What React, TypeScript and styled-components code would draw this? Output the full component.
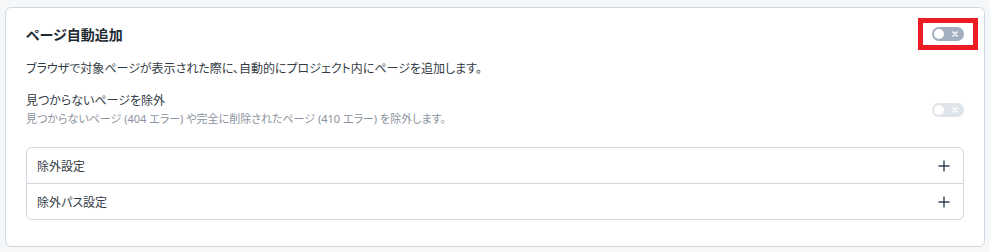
import styled, { createGlobalStyle } from "styled-components";
import { useState } from "react";

const GlobalStyle = createGlobalStyle`
  html, body {
    margin: 0;
    padding: 0;
    background: #f5f7f9;
  }
  body {
    font-family: "Noto Sans", "Noto Sans CJK JP", sans-serif;
    color: #1f2933;
    font-feature-settings: "palt";
  }
`;

const Page = styled.div`
  padding: 7px 5px 6px 5px;
`;

const Card = styled.section`
  background: #fff;
  border: 1px solid #cfd7e0;
  border-radius: 6px;
  padding: 16px 20px 26px 20px;
`;

const Header = styled.div`
  display: flex;
  align-items: center;
  justify-content: space-between;
  height: 20px;
`;

const Title = styled.h2`
  margin: 0;
  font-size: 14px;
  font-weight: 700;
  color: #1f2933;
`;

// red annotation frame around the main switch
const Highlight = styled.div`
  border: 5px solid #ec1c24;
  padding: 4px 9px;
  margin-right: -14px;
  display: flex;
`;

const Description = styled.p`
  margin: 15px 0 0 0;
  font-size: 12px;
  line-height: 20px;
  color: #333b44;
`;

const OptionRow = styled.div`
  display: flex;
  align-items: center;
  justify-content: space-between;
  margin-top: 13px;
`;

const OptionText = styled.div`
  display: flex;
  flex-direction: column;
`;

const OptionLabel = styled.span`
  font-size: 12px;
  line-height: 18px;
  color: #333b44;
`;

const OptionHint = styled.span`
  font-size: 11px;
  line-height: 18px;
  color: #8a939e;
`;

const Track = styled.button<{ $disabled?: boolean }>`
  position: relative;
  width: 32px;
  height: 14px;
  border: none;
  padding: 0;
  border-radius: 7px;
  background: ${(p) => (p.$disabled ? "#dfe4eb" : "#a2afbe")};
  cursor: ${(p) => (p.$disabled ? "default" : "pointer")};
  flex-shrink: 0;
`;

const Knob = styled.span`
  position: absolute;
  left: 2px;
  top: 2px;
  width: 10px;
  height: 10px;
  border-radius: 50%;
  background: #fff;
`;

const Cross = styled.svg`
  position: absolute;
  right: 6px;
  top: 4px;
`;

const Accordion = styled.div`
  margin-top: 19px;
  border: 1px solid #cfd7e0;
  border-radius: 6px;
`;

const AccordionItem = styled.div`
  display: flex;
  align-items: center;
  justify-content: space-between;
  height: 35px;
  padding: 0 13px 0 10px;
  font-size: 12px;
  color: #333b44;
  & + & {
    border-top: 1px solid #cfd7e0;
  }
`;

function Toggle({ disabled }: { disabled?: boolean }) {
  return (
    <Track $disabled={disabled} aria-label="toggle">
      <Knob />
      <Cross width="6" height="6" viewBox="0 0 6 6">
        <path d="M1 1L5 5M5 1L1 5" stroke="#fff" strokeWidth="1.6" strokeLinecap="round" />
      </Cross>
    </Track>
  );
}

function PlusIcon() {
  return (
    <svg width="12" height="12" viewBox="0 0 12 12">
      <path d="M6 0.5V11.5M0.5 6H11.5" stroke="#334155" strokeWidth="1.4" />
    </svg>
  );
}

function App() {
  const [sections] = useState(["除外設定", "除外パス設定"]);
  return (
    <>
      <GlobalStyle />
      <Page>
        <Card>
          <Header>
            <Title>ページ自動追加</Title>
            <Highlight>
              <Toggle />
            </Highlight>
          </Header>
          <Description>
            ブラウザで対象ページが表示された際に、自動的にプロジェクト内にページを追加します。
          </Description>
          <OptionRow>
            <OptionText>
              <OptionLabel>見つからないページを除外</OptionLabel>
              <OptionHint>
                見つからないページ (404 エラー) や完全に削除されたページ (410 エラー) を除外します。
              </OptionHint>
            </OptionText>
            <Toggle disabled />
          </OptionRow>
          <Accordion>
            {sections.map((s) => (
              <AccordionItem key={s}>
                <span>{s}</span>
                <PlusIcon />
              </AccordionItem>
            ))}
          </Accordion>
        </Card>
      </Page>
    </>
  );
}

export default App;
